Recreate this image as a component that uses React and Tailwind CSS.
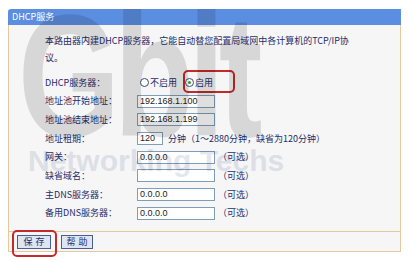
import React from "react";

// Ligne du formulaire : libellé à gauche, contrôle à droite
const Row = ({ label, children }) => (
  <div className="flex items-center h-[18.7px]">
    <div className="w-[92px] shrink-0">{label}</div>
    <div className="flex items-center">{children}</div>
  </div>
);

const Field = ({ value, width = "w-[78px]" }) => (
  <div
    className={`${width} h-[13px] border border-[#7f9db9] bg-white px-[2px] text-[9px] leading-[11px] text-[#222] font-['Liberation_Sans',sans-serif]`}
  >
    {value}
  </div>
);

const Optional = () => <span className="ml-[3px] text-[#1f2d6b]">（可选）</span>;

const Radio = ({ checked }) => (
  <span className="inline-flex items-center justify-center w-[9px] h-[9px] rounded-full border border-[#3a4f7a] bg-white mr-[1px]">
    {checked && <span className="w-[3px] h-[3px] rounded-full bg-[#2d9a2d]" />}
  </span>
);

export default function App() {
  return (
    <div className="relative w-[410px] h-[262px] bg-white overflow-hidden font-['Noto_Sans_CJK_SC',sans-serif] text-[9px] text-[#1f2d6b]">
      {/* Panneau principal */}
      <div className="ml-[8px] mt-[9px] w-[393px]">
        <div className="h-[16px] bg-[#5b8ee0] rounded-tl-[3px] text-white text-[9px] leading-[16px] pl-[4px]">
          DHCP服务
        </div>
        <div className="border border-t-0 border-[#e3c99b] bg-[#f6f6f6]">
          <div className="h-[206px] pl-[36px]">
            <p className="pt-[7px] leading-[17px]">
              本路由器内建DHCP服务器，它能自动替您配置局域网中各计算机的TCP/IP协
              <br />
              议。
            </p>
            <div className="mt-[7px]">
              <Row label="DHCP服务器：">
                <span className="ml-[3px]" />
                <Radio />
                <span className="mr-[8px]">不启用</span>
                <Radio checked />
                <span>启用</span>
              </Row>
              <Row label="地址池开始地址：">
                <Field value="192.168.1.100" />
              </Row>
              <Row label="地址池结束地址：">
                <Field value="192.168.1.199" />
              </Row>
              <Row label="地址租期：">
                <Field value="120" width="w-[26px]" />
                <span className="ml-[5px]">分钟（1～2880分钟，缺省为120分钟）</span>
              </Row>
              <Row label="网关：">
                <Field value="0.0.0.0" />
                <Optional />
              </Row>
              <Row label="缺省域名：">
                <Field value="" />
                <Optional />
              </Row>
              <Row label="主DNS服务器：">
                <Field value="0.0.0.0" />
                <Optional />
              </Row>
              <Row label="备用DNS服务器：">
                <Field value="0.0.0.0" />
                <Optional />
              </Row>
            </div>
          </div>
          <div className="h-[20px] border-t border-[#e3c99b] flex items-center gap-[10px] pl-[8px]">
            <button className="w-[34px] h-[14px] border border-[#4a5f8f] bg-[#dde4f2] text-[9px] leading-[12px] tracking-[3px] pl-[3px]">
              保存
            </button>
            <button className="w-[32px] h-[14px] border border-[#4a5f8f] bg-[#dde4f2] text-[9px] leading-[12px] tracking-[3px] pl-[3px]">
              帮助
            </button>
          </div>
        </div>
      </div>

      {/* Encadrés rouges */}
      <div className="absolute left-[183px] top-[70px] w-[52px] h-[23px] border-2 border-[#c42a2a] rounded-[5px]" />
      <div className="absolute left-[12px] top-[230px] w-[45px] h-[27px] border-2 border-[#c42a2a] rounded-[5px]" />

      {/* Filigrane */}
      <div className="absolute left-[18px] top-[-12px] origin-left scale-x-75 text-[175px] font-bold leading-none tracking-[-8px] text-black opacity-[0.12] pointer-events-none font-['Liberation_Sans',sans-serif]">
        Gbit
      </div>
      <div className="absolute left-[28px] top-[146px] text-[30px] font-bold leading-none text-[#1f2d6b] opacity-[0.11] pointer-events-none font-['Liberation_Sans',sans-serif]">
        Networking Techs
      </div>
    </div>
  );
}
